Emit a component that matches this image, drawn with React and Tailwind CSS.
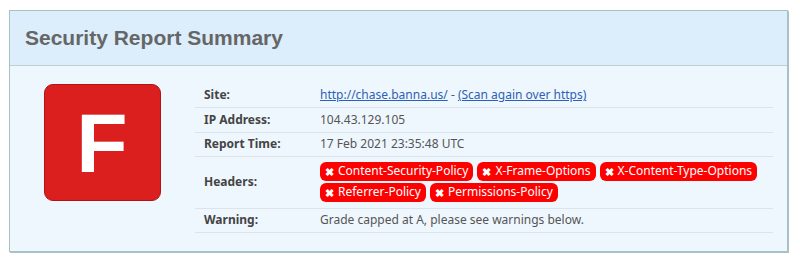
import React from "react";

const rows = [
  { label: "IP Address:", value: "104.43.129.105", h: "h-[25px]" },
  { label: "Report Time:", value: "17 Feb 2021 23:35:48 UTC", h: "h-[24px]" },
];

const missing = [
  "Content-Security-Policy",
  "X-Frame-Options",
  "X-Content-Type-Options",
  "Referrer-Policy",
  "Permissions-Policy",
];

const Badge = ({ name }) => (
  <span className="inline-flex items-center h-[19px] px-[5px] mr-[4px] mb-[2px] rounded-[6px] bg-[#ff0000] text-white text-[12px] leading-none">
    <span className="mr-[4px] text-[11px] font-bold">✖</span>
    {name}
  </span>
);

const App = () => {
  return (
    <div className="w-[800px] h-[259px] bg-white pt-[10px] pl-[9px] font-['Noto_Sans',sans-serif]">
      <div className="w-[779px] border border-[#a7c1c5] shadow-[1px_1px_0_#a7c1c5]">
        <div className="h-[55px] bg-[#dcedfc] border-b border-[#b9d0d4] flex items-center pl-[15px]">
          <h1 className="font-['Liberation_Sans',Arial,sans-serif] font-bold text-[21px] text-[#666666]">
            Security Report Summary
          </h1>
        </div>

        <div className="bg-[#eff7fe] flex pt-[18px] pb-[18px]">
          <div className="w-[185px] flex justify-center pr-[1px]">
            <div className="w-[117px] h-[117px] rounded-[9px] bg-[#db1f1f] border border-[#b01414] flex items-center justify-center">
              <span className="font-['Liberation_Sans',Arial,sans-serif] font-bold text-[84px] leading-none text-white">
                F
              </span>
            </div>
          </div>

          <table className="w-[578px] text-[12px] border-collapse">
            <tbody>
              <tr className="border-b border-[#dde3e6] h-[23px]">
                <td className="w-[125px] pl-[9px] font-bold text-[#444444]">Site:</td>
                <td className="text-[#555555]">
                  <a href="#" className="text-[#2c5fb8] underline">
                    http://chase.banna.us/
                  </a>{" "}
                  -{" "}
                  <a href="#" className="text-[#2c5fb8] underline">
                    (Scan again over https)
                  </a>
                </td>
              </tr>
              {rows.map((row) => (
                <tr key={row.label} className={`border-b border-[#dde3e6] ${row.h}`}>
                  <td className="pl-[9px] font-bold text-[#444444]">{row.label}</td>
                  <td className="text-[#555555]">{row.value}</td>
                </tr>
              ))}
              <tr className="border-b border-[#dde3e6] h-[50px]">
                <td className="pl-[9px] font-bold text-[#444444]">Headers:</td>
                <td className="pt-[5px] pb-[4px]">
                  <div className="flex flex-wrap">
                    {missing.map((m) => (
                      <Badge key={m} name={m} />
                    ))}
                  </div>
                </td>
              </tr>
              <tr className="border-b border-[#dde3e6] h-[24px]">
                <td className="pl-[9px] font-bold text-[#444444]">Warning:</td>
                <td className="text-[#555555]">
                  Grade capped at A, please see warnings below.
                </td>
              </tr>
            </tbody>
          </table>
        </div>
      </div>
    </div>
  );
};

export default App;
